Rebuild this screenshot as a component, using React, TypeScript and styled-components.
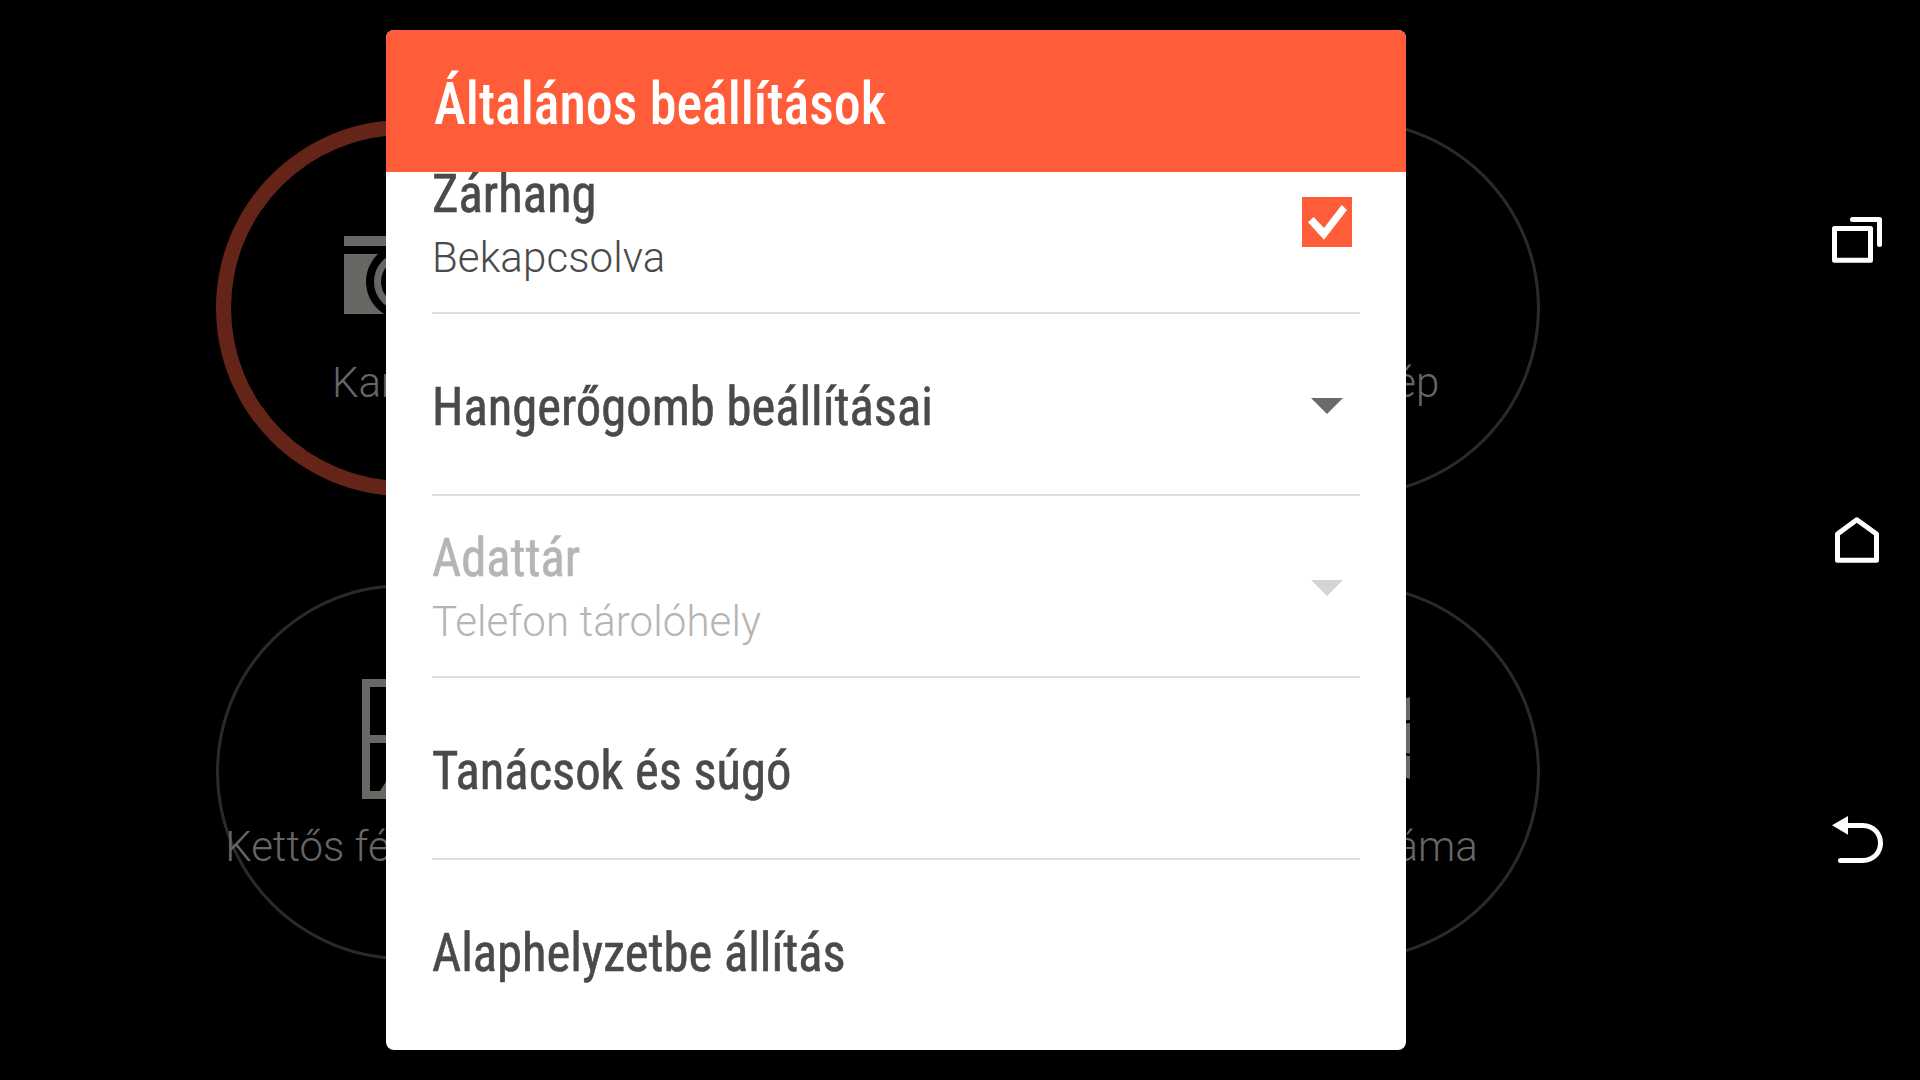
import { useState } from "react"
import styled, { createGlobalStyle } from "styled-components"

const GlobalStyle = createGlobalStyle`
    * {
        box-sizing : border-box;
    }
    body {
        margin : 0;
        background : #000000;
        overflow : hidden;
        font-family : Roboto, "Noto Sans", sans-serif;
    }
`
const Screen = styled.div`
    position : relative;
    display : flex;
    justify-content : space-between;
    width : 1920px;
    height : 1080px;
    overflow : hidden;
    background : #000000;
`
const Modes = styled.div`
    display : grid;
    grid-template-columns : repeat(2, 376px);
    grid-template-rows : repeat(2, 376px);
    column-gap : 572px;
    row-gap : 88px;
    padding : 120px 0 0 216px;
`
const Mode = styled.div<{ $active?: boolean }>`
    display : flex;
    flex-direction : column;
    align-items : center;
    padding-top : 95px;
    border-radius : 50%;
    box-shadow : inset 0 0 0 ${props => props.$active ? "15px #642518" : "3px #2a2a2a"};
    svg {
        flex-shrink : 0;
    }
`
const ModeName = styled.span`
    margin-top : 20px;
    font-size : 42px;
    line-height : 56px;
    font-weight : 300;
    white-space : nowrap;
    color : #666666;
`
const Nav = styled.nav`
    display : flex;
    flex-direction : column;
    width : 126px;
    padding : 90px 0;
`
const NavButton = styled.button`
    display : flex;
    flex : 1;
    align-items : center;
    justify-content : center;
    padding : 0;
    border : none;
    background : none;
    cursor : pointer;
`
const Overlay = styled.div`
    position : absolute;
    top : 30px;
    left : 386px;
`
const Dialog = styled.div`
    display : flex;
    flex-direction : column;
    width : 1020px;
    height : 1020px;
    border-radius : 8px;
    overflow : hidden;
    background : #ffffff;
`
const Header = styled.header`
    display : flex;
    flex-shrink : 0;
    height : 142px;
    padding : 0 48px;
    background : #ff5d3a;
`
const Title = styled.h1`
    margin : 0;
    font-family : "Roboto Condensed", Roboto, sans-serif;
    font-stretch : 75%;
    font-size : 59px;
    line-height : 148px;
    font-weight : 500;
    color : #ffffff;
    transform : scaleX(0.915);
    transform-origin : left;
`
const List = styled.div`
    flex : 1;
    min-height : 0;
    overflow : hidden;
    padding : 0 46px;
`
const Row = styled.div<{ $disabled?: boolean }>`
    display : flex;
    align-items : center;
    justify-content : space-between;
    height : 182px;
    border-bottom : 2px solid #dedede;
    color : ${props => props.$disabled ? "#b5b5b5" : "#4a4a4a"};
    /* the list is scrolled a little, the first row is cut by the header */
    &:first-child {
        margin-top : -40px;
    }
    &:last-child {
        border-bottom-color : transparent;
    }
    > span {
        padding-top : 5px;
    }
`
const Texts = styled.div`
    display : flex;
    flex-direction : column;
    gap : 4px;
`
const RowTitle = styled.span`
    font-family : "Roboto Condensed", Roboto, sans-serif;
    font-stretch : 75%;
    font-size : 54px;
    line-height : 64px;
    font-weight : 400;
    -webkit-text-stroke : 0.6px currentColor;
    padding-top : 4px;
    transform : scaleX(0.938);
    transform-origin : left;
`
const RowSub = styled.span`
    font-size : 42px;
    line-height : 56px;
    font-weight : 300;
    letter-spacing : 0.1px;
`
const Widget = styled.div`
    display : flex;
    align-items : center;
    justify-content : center;
    width : 50px;
    height : 50px;
    margin-right : 8px;
`
const CheckBox = styled.button<{ $checked: boolean }>`
    width : 50px;
    height : 50px;
    padding : 0;
    border : ${props => props.$checked ? "none" : "4px solid #b5b5b5"};
    background : ${props => props.$checked ? "#ff5d3a" : "#ffffff"};
    cursor : pointer;
    svg {
        display : block;
    }
`
const Arrow = styled.svg<{ $disabled?: boolean }>`
    margin-top : 4px;
    fill : ${props => props.$disabled ? "#d4d3d5" : "#6a696b"};
`

const CameraIcon = () => (
    <svg width="120" height="120" viewBox="0 0 120 120" fill="#666864">
        <path d="M0 21H120V31H0Z" />
        <path d="M0 39H34A38 38 0 0 0 40 99H0Z" />
        <path d="M120 39H86A38 38 0 0 1 80 99H120Z" />
        <circle cx="60" cy="66.7" r="26.5" fill="none" stroke="#666864" strokeWidth="7" />
    </svg>
)
const DualIcon = () => (
    <svg width="84" height="120" viewBox="0 0 84 120" fill="none" stroke="#666864" strokeWidth="8">
        <path d="M4 4H80V116H4ZM4 60H80" />
        <path d="M18 112L34 87H50L66 112Z" fill="#666864" stroke="none" />
    </svg>
)
const SelfieIcon = () => (
    <svg width="84" height="120" viewBox="0 0 84 120" fill="#666666">
        <circle cx="42" cy="40" r="22" />
        <path d="M4 104C4 60 80 60 80 104Z" />
    </svg>
)
const PanoramaIcon = () => (
    <svg width="116" height="120" viewBox="0 0 116 120" fill="#6a6a6a">
        <path d="M0 18Q58 38 116 18V41Q58 47 0 41Z" />
        <path d="M0 44Q58 50 116 44V74.5Q58 68 0 74.5Z" />
        <path d="M0 77Q58 71 116 77V100Q58 80 0 100Z" />
    </svg>
)

const modes = [
    { name: "Kamera", icon: <CameraIcon />, active: true },
    { name: "Önarckép", icon: <SelfieIcon /> },
    { name: "Kettős fényképezés", icon: <DualIcon /> },
    { name: "Körpanoráma", icon: <PanoramaIcon /> },
]

const DropDown = ({ disabled }: { disabled?: boolean }) => (
    <Widget>
        <Arrow $disabled={disabled} width="32" height="16" viewBox="0 0 32 16">
            <path d="M0 0H32L16 16Z" />
        </Arrow>
    </Widget>
)

const App = () => {
    const [sound, setSound] = useState(true)
    const toggleSound = () => setSound(prev => !prev)
    return (
        <>
            <GlobalStyle />
            <Screen>
                <Modes>
                    {modes.map(mode =>
                        <Mode key={mode.name} $active={mode.active}>
                            {mode.icon}
                            <ModeName>{mode.name}</ModeName>
                        </Mode>
                    )}
                </Modes>
                <Nav>
                    <NavButton aria-label="recent">
                        <svg width="60" height="60" viewBox="0 0 60 60" fill="none" stroke="#ffffff" strokeWidth="5" strokeLinecap="round" strokeLinejoin="round">
                            <path d="M7.5 18.5H43.5V50.2H7.5Z" />
                            <path d="M25.5 9.5H52.5V34.5" />
                        </svg>
                    </NavButton>
                    <NavButton aria-label="home">
                        <svg width="60" height="60" viewBox="0 0 60 60" fill="none" stroke="#ffffff" strokeWidth="5" strokeLinejoin="round">
                            <path d="M10.5 50.2V24L29.8 9.7L49.5 24V50.2Z" />
                        </svg>
                    </NavButton>
                    <NavButton aria-label="back">
                        <svg width="60" height="60" viewBox="0 0 60 60" fill="none" stroke="#ffffff" strokeWidth="5" strokeLinecap="round">
                            <path d="M18 15.5H35.5C59.5 16 59.5 50 35.5 50.4H13.5" />
                            <path d="M5 15.3L21 6V24.7Z" fill="#ffffff" stroke="none" />
                        </svg>
                    </NavButton>
                </Nav>
                <Overlay>
                    <Dialog>
                        <Header>
                            <Title>Általános beállítások</Title>
                        </Header>
                        <List>
                            <Row>
                                <Texts>
                                    <RowTitle>Zárhang</RowTitle>
                                    <RowSub>Bekapcsolva</RowSub>
                                </Texts>
                                <Widget>
                                    <CheckBox $checked={sound} onClick={toggleSound}>
                                        {sound &&
                                            <svg width="50" height="50" viewBox="0 0 50 50" fill="#ffffff">
                                                <path d="M6 25.3L11.7 20L22 31L39.7 8L45 13L22 42.8Z" />
                                            </svg>}
                                    </CheckBox>
                                </Widget>
                            </Row>
                            <Row>
                                <RowTitle>Hangerőgomb beállításai</RowTitle>
                                <DropDown />
                            </Row>
                            <Row $disabled>
                                <Texts>
                                    <RowTitle>Adattár</RowTitle>
                                    <RowSub>Telefon tárolóhely</RowSub>
                                </Texts>
                                <DropDown disabled />
                            </Row>
                            <Row>
                                <RowTitle>Tanácsok és súgó</RowTitle>
                            </Row>
                            <Row>
                                <RowTitle>Alaphelyzetbe állítás</RowTitle>
                            </Row>
                        </List>
                    </Dialog>
                </Overlay>
            </Screen>
        </>
    )
}
export default App
